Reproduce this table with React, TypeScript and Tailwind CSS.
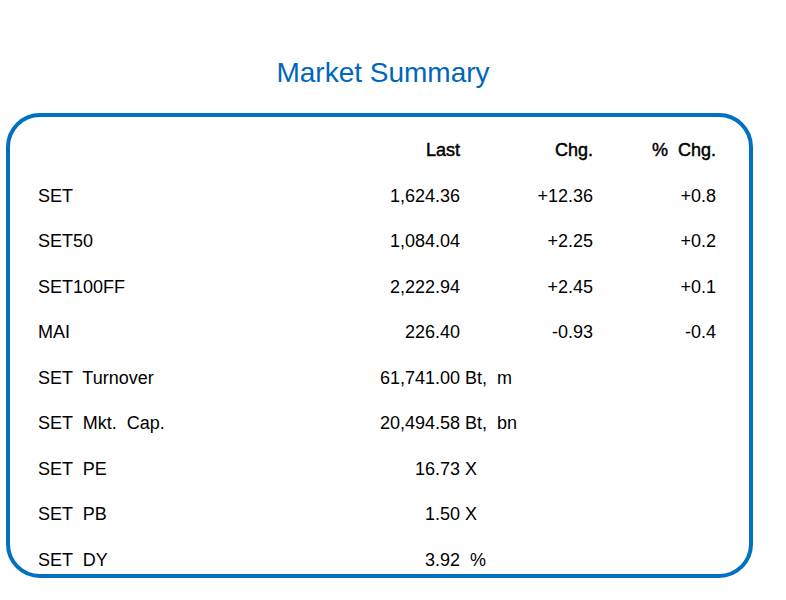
const rows: {
  label: string;
  last: string;
  chg?: string;
  pct?: string;
  unit?: string;
}[] = [
  { label: 'SET', last: '1,624.36', chg: '+12.36', pct: '+0.8' },
  { label: 'SET50', last: '1,084.04', chg: '+2.25', pct: '+0.2' },
  { label: 'SET100FF', last: '2,222.94', chg: '+2.45', pct: '+0.1' },
  { label: 'MAI', last: '226.40', chg: '-0.93', pct: '-0.4' },
  { label: 'SET  Turnover', last: '61,741.00', unit: ' Bt,  m' },
  { label: 'SET  Mkt.  Cap.', last: '20,494.58', unit: ' Bt,  bn' },
  { label: 'SET  PE', last: '16.73', unit: ' X' },
  { label: 'SET  PB', last: '1.50', unit: ' X' },
  { label: 'SET  DY', last: '3.92', unit: '  %' },
];

export default function App() {
  return (
    <div className="w-[786px] h-[600px] bg-white overflow-hidden font-['Liberation_Sans',Arial,sans-serif] text-black">
      {/* Title */}
      <div className="w-[766px] pt-[57px] text-center text-[28px] leading-[32px] text-[#0066bb]">
        Market Summary
      </div>

      {/* Summary box */}
      <div className="mt-[24px] ml-[6px] w-[747px] h-[465px] border-[4px] border-[#0070c0] rounded-[34px] pt-[11px] pl-[28px]">
        <div className="flex text-[18px] leading-[45.5px] [-webkit-text-stroke:0.45px_black]">
          <div className="w-[300px]" />
          <div className="w-[122px] text-right">Last</div>
          <div className="w-[133px] text-right">Chg.</div>
          <div className="w-[123px] text-right whitespace-pre">%  Chg.</div>
        </div>

        {rows.map((row) => (
          <div key={row.label} className="flex text-[18px] leading-[45.5px] whitespace-pre">
            <div className="w-[300px]">{row.label}</div>
            <div className="w-[122px] text-right">{row.last}</div>
            {row.unit ? (
              <div>{row.unit}</div>
            ) : (
              <>
                <div className="w-[133px] text-right">{row.chg}</div>
                <div className="w-[123px] text-right">{row.pct}</div>
              </>
            )}
          </div>
        ))}
      </div>
    </div>
  );
}
